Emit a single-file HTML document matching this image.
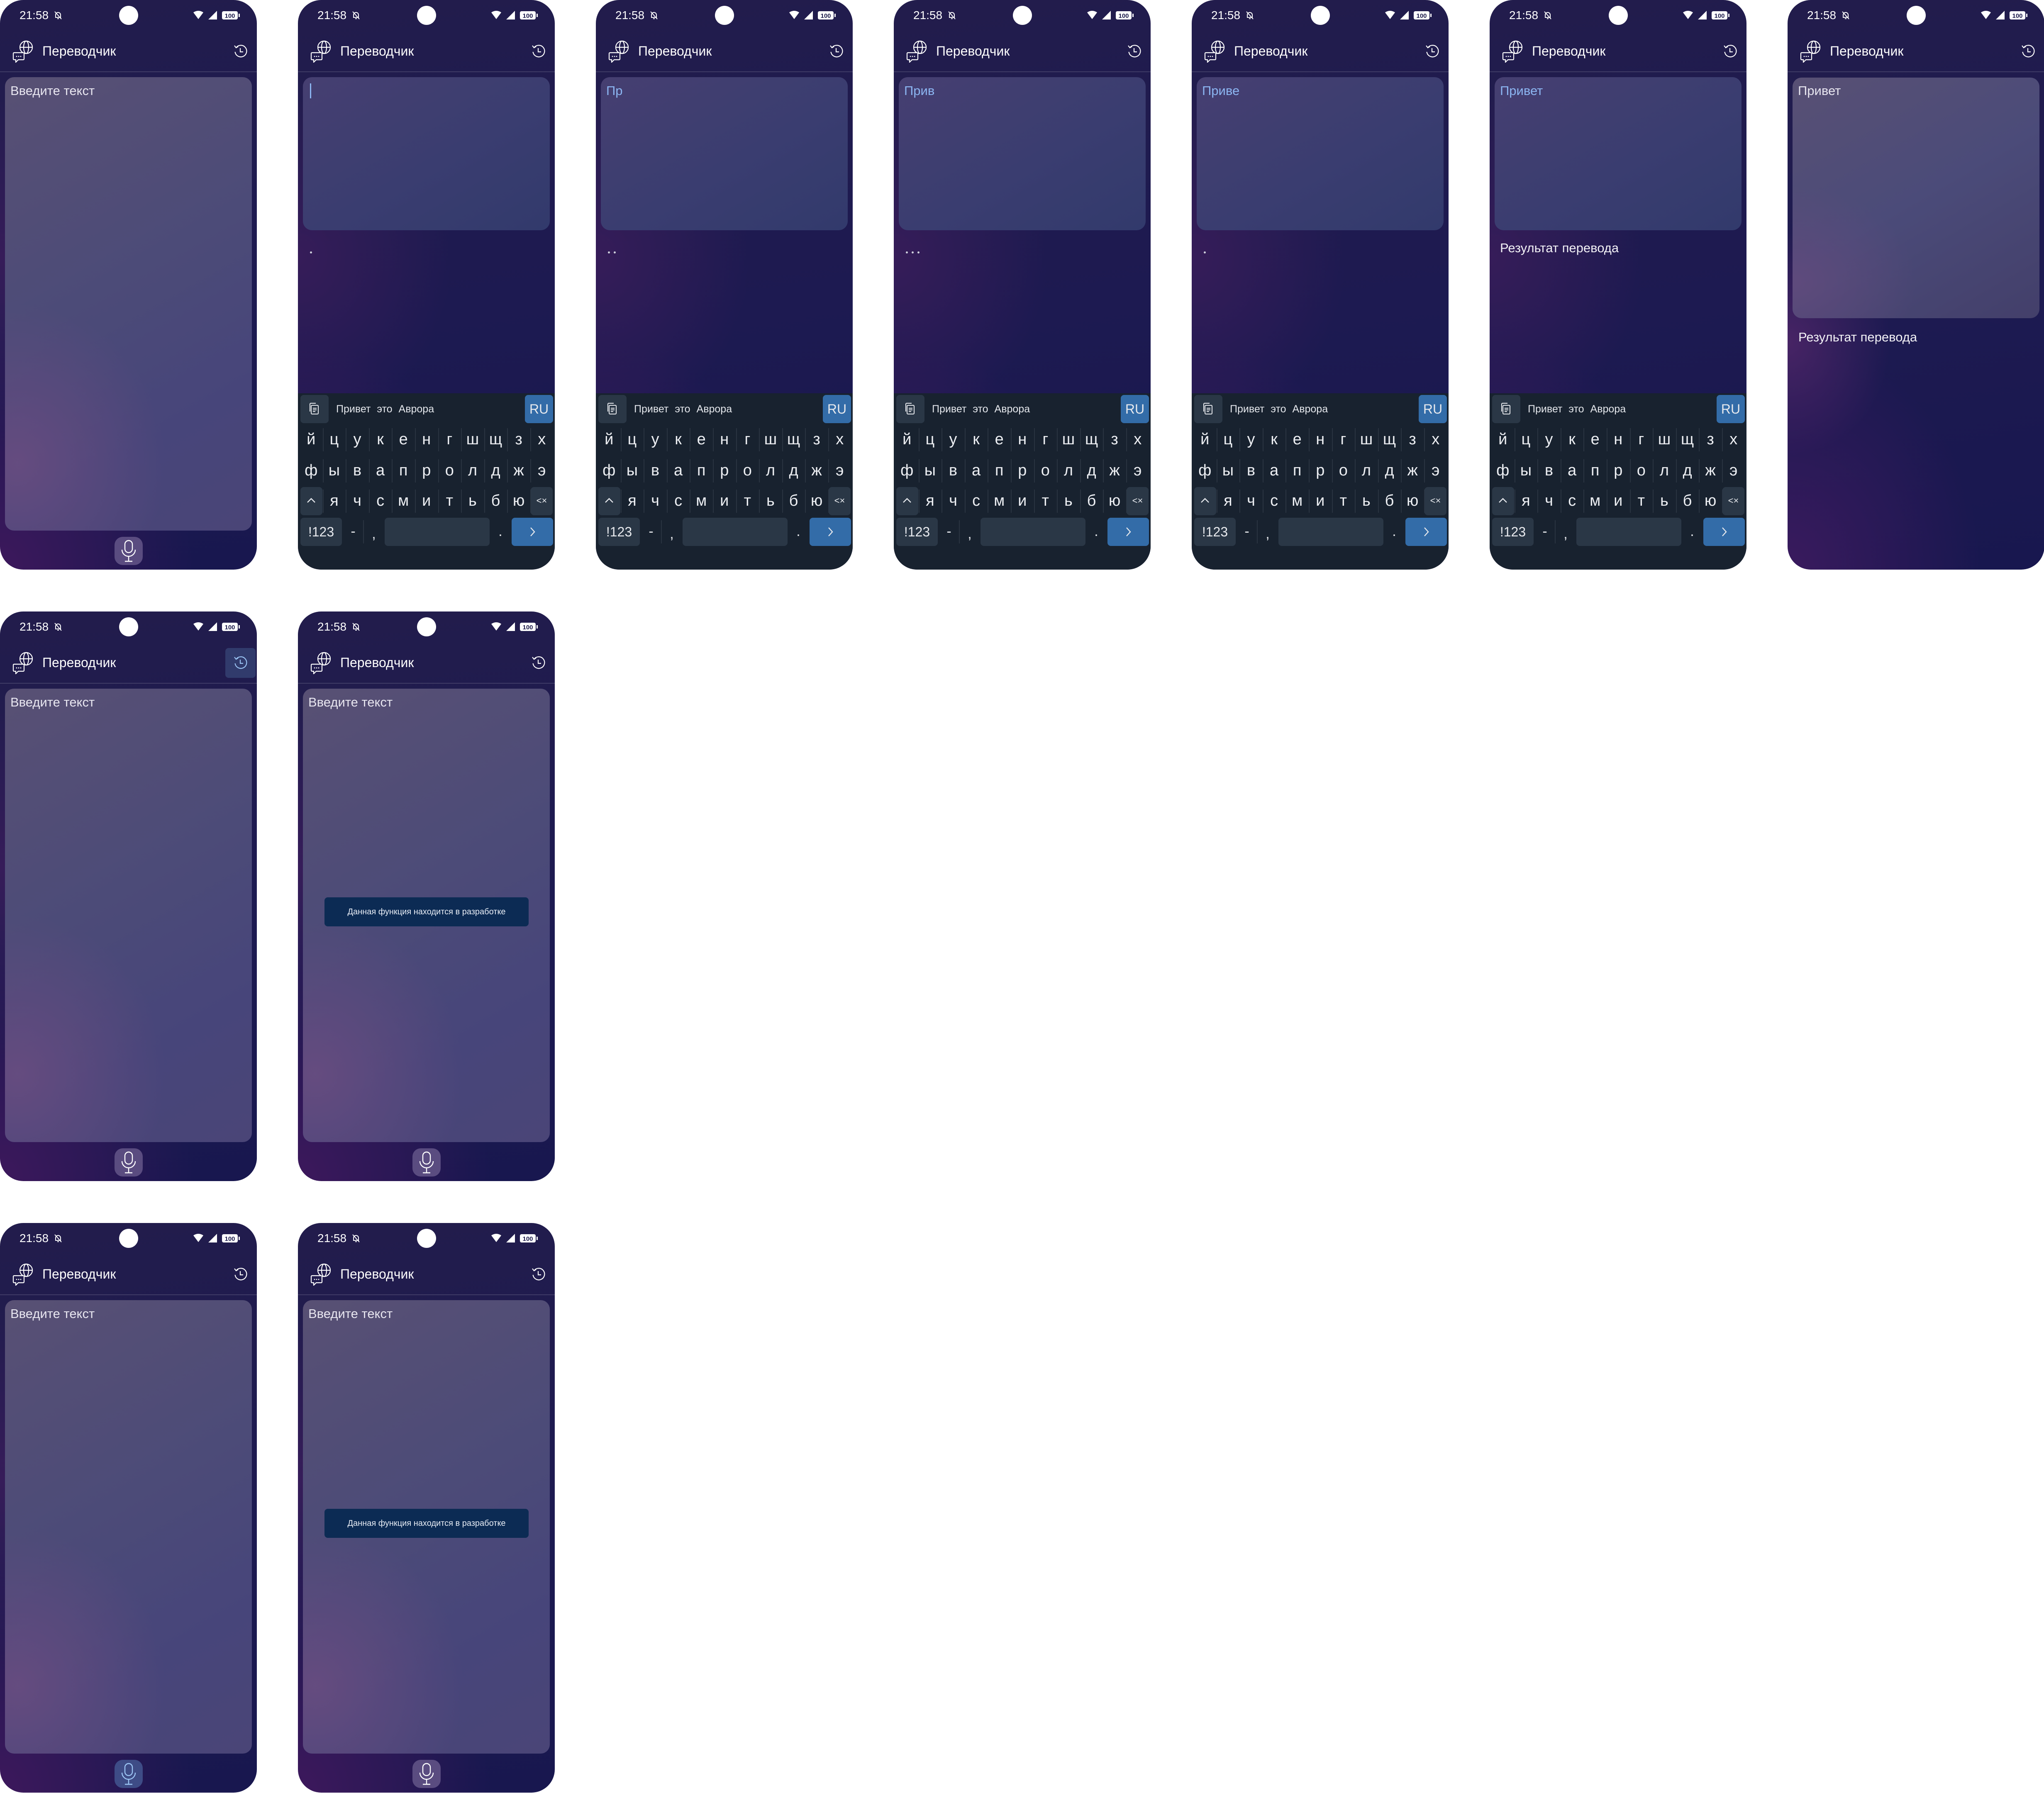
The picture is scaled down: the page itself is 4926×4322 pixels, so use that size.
<!DOCTYPE html>
<html><head><meta charset="utf-8"><style>
*{margin:0;padding:0;box-sizing:border-box}
body{width:4926px;height:4322px;background:#fff;position:relative;overflow:hidden;font-family:"Liberation Sans","Noto Sans CJK SC",sans-serif;color:#ecebf3}
.ph{position:absolute;width:619px;height:1373px;border-radius:56px;overflow:hidden;
background:radial-gradient(ellipse 75% 40% at 0% 100%,#3d185c 0%,rgba(61,24,92,0) 100%),radial-gradient(ellipse 60% 30% at 0% 45%,rgba(70,30,95,.6) 0%,rgba(70,30,95,0) 100%),linear-gradient(170deg,#221c4c 0%,#1d1a51 55%,#18174f 100%)}
.a{position:absolute}
.time{left:47px;top:20px;font-size:28px;line-height:34px;color:#fff}
.cam{left:287px;top:14px;width:46px;height:46px;border-radius:50%;background:#fff}
.title{left:102px;top:104px;font-size:32px;line-height:38px;color:#fff}
.div{left:0;top:172px;width:619px;height:2px;background:rgba(255,255,255,.14)}
.ta{left:12px;top:186px;width:595px;height:1093px;border-radius:22px;
background:radial-gradient(ellipse 60% 35% at 5% 85%,rgba(104,76,128,.9) 0%,rgba(104,76,128,0) 100%),linear-gradient(150deg,#585074 0%,#4c4b78 45%,#47457a 75%,#4a4577 100%)}
.tak{left:12px;top:186px;width:595px;height:369px;border-radius:22px;background:linear-gradient(150deg,#463f71 0%,#3a3d70 55%,#323a6c 100%)}
.ph7ta{left:12px;top:187px;width:595px;height:580px;border-radius:22px;
background:radial-gradient(ellipse 50% 40% at 0% 85%,rgba(100,74,125,.8) 0%,rgba(100,74,125,0) 100%),linear-gradient(150deg,#585074 0%,#4b4b79 50%,#433f6a 100%)}
.ph7{background:radial-gradient(ellipse 40% 20% at 0% 60%,rgba(90,40,110,.7) 0%,rgba(90,40,110,0) 100%),radial-gradient(ellipse 75% 40% at 0% 100%,#3a1a5e 0%,rgba(58,26,94,0) 100%),linear-gradient(170deg,#221c4c 0%,#1d1a51 55%,#18174f 100%)}
.ph_{}
.txt{left:25px;top:200px;font-size:31px;line-height:38px;color:#e8e6f0}
.blue{color:#8cb6f2}
.res{left:25px;font-size:31px;line-height:38px;color:#f2f1f6}
.mic{left:276px;top:1294px;width:68px;height:68px;border-radius:20px;background:#5a4c80}
.dot{width:5px;height:5px;border-radius:50%;background:#cfd0dc;top:606px}
.toast{left:64px;top:689px;width:492px;height:70px;border-radius:8px;background:#0c2b54;color:#e9eef6;font-size:20px;line-height:70px;text-align:center}
.kb{left:0;top:948px;width:619px;height:425px;background:#18222f}
.key{position:absolute;background:#2a3746;border-radius:8px;color:#e8eaee;text-align:center}
.sug{position:absolute;left:92px;top:4px;line-height:68px;font-size:25px;color:#e4e7ec;word-spacing:8px}
.row{position:absolute;left:4px;display:flex;height:56px}
.c{width:55.6px;height:56px;line-height:54px;text-align:center;font-size:38px;color:#eceef2}
.c+.c{box-shadow:inset 2px 0 0 #2a3441}
.hist{left:562px;top:106px}
.hl{left:543px;top:88px;width:73px;height:72px;border-radius:8px;background:#313b6c}
</style></head><body>

<!-- ============ ROW 1 ============ -->
<!-- Phone 1 -->
<div class="ph" style="left:0;top:0">
 <div class="a time">21:58</div>
 <svg class="a" style="left:128px;top:25px" width="24" height="24" viewBox="0 0 24 24" fill="none" stroke="#fff" stroke-width="2"><path d="M6 17 V11 a6 6 0 0 1 12 0 V17 H5 M10 20 h4"/><path d="M4 3 L20 21"/></svg>
 <div class="a cam"></div>
 <svg class="a" style="left:460px;top:22px" width="120" height="30" viewBox="0 0 120 30"><path d="M6 8 Q18 0 30 8 L18 24 Z" fill="#fff"/><path d="M42 25 L63 25 L63 4 Z" fill="#fff"/><rect x="75" y="5" width="38" height="20" rx="4" fill="#fff"/><text x="94" y="21" text-anchor="middle" font-family="Liberation Sans" font-weight="bold" font-size="15" fill="#1d1b4c">100</text><rect x="115" y="11" width="3" height="8" fill="#fff"/></svg>
 <svg class="a" style="left:30px;top:97px" width="50" height="54" viewBox="0 0 50 54" fill="none" stroke="#fff" stroke-width="2.2"><circle cx="33" cy="17" r="15"/><ellipse cx="33" cy="17" rx="6" ry="15"/><line x1="18" y1="17" x2="48" y2="17"/><path d="M4 30 h22 a2 2 0 0 1 2 2 v13 a2 2 0 0 1 -2 2 h-12 l-6 6 v-6 h-4 a2 2 0 0 1 -2 -2 v-13 a2 2 0 0 1 2 -2z" fill="#211c4e"/><g fill="#fff" stroke="none"><circle cx="10" cy="39" r="1.4"/><circle cx="15" cy="39" r="1.4"/><circle cx="20" cy="39" r="1.4"/></g></svg>
 <div class="a title">Переводчик</div>
 <svg class="a hist" width="36" height="36" viewBox="0 0 36 36" fill="none" stroke="#fff" stroke-width="2.2"><path d="M7 9 A14 14 0 1 1 4.5 19"/><path d="M3 4 L7 9 L12 6"/><path d="M17 10 V19 H24"/></svg>
 <div class="a div"></div>
 <div class="a ta"></div>
 <div class="a txt">Введите текст</div>
 <div class="a mic"><svg width="68" height="68" viewBox="0 0 68 68" fill="none" stroke="#fff" stroke-width="2.4"><rect x="25" y="9" width="18" height="29" rx="9"/><path d="M18 31 a16 16 0 0 0 32 0"/><path d="M34 47 V59 M25 59 H43"/></svg></div>
</div>

<!-- Keyboard phones template repeated -->
<!-- Phone 2 -->
<div class="ph" style="left:718px;top:0">
 <div class="a time">21:58</div>
 <svg class="a" style="left:128px;top:25px" width="24" height="24" viewBox="0 0 24 24" fill="none" stroke="#fff" stroke-width="2"><path d="M6 17 V11 a6 6 0 0 1 12 0 V17 H5 M10 20 h4"/><path d="M4 3 L20 21"/></svg>
 <div class="a cam"></div>
 <svg class="a" style="left:460px;top:22px" width="120" height="30" viewBox="0 0 120 30"><path d="M6 8 Q18 0 30 8 L18 24 Z" fill="#fff"/><path d="M42 25 L63 25 L63 4 Z" fill="#fff"/><rect x="75" y="5" width="38" height="20" rx="4" fill="#fff"/><text x="94" y="21" text-anchor="middle" font-family="Liberation Sans" font-weight="bold" font-size="15" fill="#1d1b4c">100</text><rect x="115" y="11" width="3" height="8" fill="#fff"/></svg>
 <svg class="a" style="left:30px;top:97px" width="50" height="54" viewBox="0 0 50 54" fill="none" stroke="#fff" stroke-width="2.2"><circle cx="33" cy="17" r="15"/><ellipse cx="33" cy="17" rx="6" ry="15"/><line x1="18" y1="17" x2="48" y2="17"/><path d="M4 30 h22 a2 2 0 0 1 2 2 v13 a2 2 0 0 1 -2 2 h-12 l-6 6 v-6 h-4 a2 2 0 0 1 -2 -2 v-13 a2 2 0 0 1 2 -2z" fill="#211c4e"/><g fill="#fff" stroke="none"><circle cx="10" cy="39" r="1.4"/><circle cx="15" cy="39" r="1.4"/><circle cx="20" cy="39" r="1.4"/></g></svg>
 <div class="a title">Переводчик</div>
 <svg class="a hist" width="36" height="36" viewBox="0 0 36 36" fill="none" stroke="#fff" stroke-width="2.2"><path d="M7 9 A14 14 0 1 1 4.5 19"/><path d="M3 4 L7 9 L12 6"/><path d="M17 10 V19 H24"/></svg>
 <div class="a div"></div>
 <div class="a tak"></div>
 <div class="a" style="left:29px;top:201px;width:3px;height:36px;background:#8cb6f2"></div>
 <div class="a dot" style="left:29px"></div>
 <div class="a kb">
  <div class="key" style="left:6px;top:4px;width:68px;height:68px"><svg width="68" height="68" viewBox="0 0 68 68" fill="none" stroke="#e8eaee" stroke-width="2"><rect x="26" y="25" width="17" height="21" rx="2"/><path d="M23 40 V22 a2 2 0 0 1 2 -2 H37"/><path d="M30 32 H39 M30 36 H39 M30 40 H36"/></svg></div>
  <div class="sug">Привет это Аврора</div>
  <div class="key" style="left:547px;top:4px;width:68px;height:68px;background:#336ca8;font-size:32px;line-height:68px">RU</div>
  <div class="row" style="top:84px"><div class="c">й</div><div class="c">ц</div><div class="c">у</div><div class="c">к</div><div class="c">е</div><div class="c">н</div><div class="c">г</div><div class="c">ш</div><div class="c">щ</div><div class="c">з</div><div class="c">х</div></div>
  <div class="row" style="top:159px"><div class="c">ф</div><div class="c">ы</div><div class="c">в</div><div class="c">а</div><div class="c">п</div><div class="c">р</div><div class="c">о</div><div class="c">л</div><div class="c">д</div><div class="c">ж</div><div class="c">э</div></div>
  <div class="row" style="top:232px"><div class="c"></div><div class="c">я</div><div class="c">ч</div><div class="c">с</div><div class="c">м</div><div class="c">и</div><div class="c">т</div><div class="c">ь</div><div class="c">б</div><div class="c">ю</div><div class="c"></div></div>
  <div class="key" style="left:6px;top:226px;width:53px;height:68px"><svg width="53" height="68" viewBox="0 0 53 68" fill="none" stroke="#e8eaee" stroke-width="2.4"><path d="M17 37 L26 28 L35 37"/></svg></div>
  <div class="key" style="left:561px;top:226px;width:53px;height:68px;font-size:22px;line-height:66px">&lt;×</div>
  <div class="key" style="left:6px;top:300px;width:100px;height:68px;font-size:32px;line-height:68px">!123</div>
  <div class="a" style="left:123px;top:300px;width:20px;font-size:34px;line-height:66px;color:#e8eaee;text-align:center">-</div>
  <div class="a" style="left:157px;top:306px;width:2px;height:56px;background:#2a3441"></div>
  <div class="a" style="left:173px;top:306px;width:20px;font-size:34px;line-height:66px;color:#e8eaee;text-align:center">,</div>
  <div class="key" style="left:209px;top:300px;width:253px;height:68px"></div>
  <div class="a" style="left:478px;top:300px;width:20px;font-size:34px;line-height:66px;color:#e8eaee;text-align:center">.</div>
  <div class="key" style="left:515px;top:300px;width:100px;height:68px;background:#336ca8"><svg width="100" height="68" viewBox="0 0 100 68" fill="none" stroke="#e8eaee" stroke-width="2.4"><path d="M46 24 L55 34 L46 44"/></svg></div>
 </div>
</div>

<!-- Phone 3 -->
<div class="ph" style="left:1436px;top:0">
 <div class="a time">21:58</div>
 <svg class="a" style="left:128px;top:25px" width="24" height="24" viewBox="0 0 24 24" fill="none" stroke="#fff" stroke-width="2"><path d="M6 17 V11 a6 6 0 0 1 12 0 V17 H5 M10 20 h4"/><path d="M4 3 L20 21"/></svg>
 <div class="a cam"></div>
 <svg class="a" style="left:460px;top:22px" width="120" height="30" viewBox="0 0 120 30"><path d="M6 8 Q18 0 30 8 L18 24 Z" fill="#fff"/><path d="M42 25 L63 25 L63 4 Z" fill="#fff"/><rect x="75" y="5" width="38" height="20" rx="4" fill="#fff"/><text x="94" y="21" text-anchor="middle" font-family="Liberation Sans" font-weight="bold" font-size="15" fill="#1d1b4c">100</text><rect x="115" y="11" width="3" height="8" fill="#fff"/></svg>
 <svg class="a" style="left:30px;top:97px" width="50" height="54" viewBox="0 0 50 54" fill="none" stroke="#fff" stroke-width="2.2"><circle cx="33" cy="17" r="15"/><ellipse cx="33" cy="17" rx="6" ry="15"/><line x1="18" y1="17" x2="48" y2="17"/><path d="M4 30 h22 a2 2 0 0 1 2 2 v13 a2 2 0 0 1 -2 2 h-12 l-6 6 v-6 h-4 a2 2 0 0 1 -2 -2 v-13 a2 2 0 0 1 2 -2z" fill="#211c4e"/><g fill="#fff" stroke="none"><circle cx="10" cy="39" r="1.4"/><circle cx="15" cy="39" r="1.4"/><circle cx="20" cy="39" r="1.4"/></g></svg>
 <div class="a title">Переводчик</div>
 <svg class="a hist" width="36" height="36" viewBox="0 0 36 36" fill="none" stroke="#fff" stroke-width="2.2"><path d="M7 9 A14 14 0 1 1 4.5 19"/><path d="M3 4 L7 9 L12 6"/><path d="M17 10 V19 H24"/></svg>
 <div class="a div"></div>
 <div class="a tak"></div>
 <div class="a txt blue">Пр</div>
 <div class="a dot" style="left:29px"></div><div class="a dot" style="left:43px"></div>
 <div class="a kb">
  <div class="key" style="left:6px;top:4px;width:68px;height:68px"><svg width="68" height="68" viewBox="0 0 68 68" fill="none" stroke="#e8eaee" stroke-width="2"><rect x="26" y="25" width="17" height="21" rx="2"/><path d="M23 40 V22 a2 2 0 0 1 2 -2 H37"/><path d="M30 32 H39 M30 36 H39 M30 40 H36"/></svg></div>
  <div class="sug">Привет это Аврора</div>
  <div class="key" style="left:547px;top:4px;width:68px;height:68px;background:#336ca8;font-size:32px;line-height:68px">RU</div>
  <div class="row" style="top:84px"><div class="c">й</div><div class="c">ц</div><div class="c">у</div><div class="c">к</div><div class="c">е</div><div class="c">н</div><div class="c">г</div><div class="c">ш</div><div class="c">щ</div><div class="c">з</div><div class="c">х</div></div>
  <div class="row" style="top:159px"><div class="c">ф</div><div class="c">ы</div><div class="c">в</div><div class="c">а</div><div class="c">п</div><div class="c">р</div><div class="c">о</div><div class="c">л</div><div class="c">д</div><div class="c">ж</div><div class="c">э</div></div>
  <div class="row" style="top:232px"><div class="c"></div><div class="c">я</div><div class="c">ч</div><div class="c">с</div><div class="c">м</div><div class="c">и</div><div class="c">т</div><div class="c">ь</div><div class="c">б</div><div class="c">ю</div><div class="c"></div></div>
  <div class="key" style="left:6px;top:226px;width:53px;height:68px"><svg width="53" height="68" viewBox="0 0 53 68" fill="none" stroke="#e8eaee" stroke-width="2.4"><path d="M17 37 L26 28 L35 37"/></svg></div>
  <div class="key" style="left:561px;top:226px;width:53px;height:68px;font-size:22px;line-height:66px">&lt;×</div>
  <div class="key" style="left:6px;top:300px;width:100px;height:68px;font-size:32px;line-height:68px">!123</div>
  <div class="a" style="left:123px;top:300px;width:20px;font-size:34px;line-height:66px;color:#e8eaee;text-align:center">-</div>
  <div class="a" style="left:157px;top:306px;width:2px;height:56px;background:#2a3441"></div>
  <div class="a" style="left:173px;top:306px;width:20px;font-size:34px;line-height:66px;color:#e8eaee;text-align:center">,</div>
  <div class="key" style="left:209px;top:300px;width:253px;height:68px"></div>
  <div class="a" style="left:478px;top:300px;width:20px;font-size:34px;line-height:66px;color:#e8eaee;text-align:center">.</div>
  <div class="key" style="left:515px;top:300px;width:100px;height:68px;background:#336ca8"><svg width="100" height="68" viewBox="0 0 100 68" fill="none" stroke="#e8eaee" stroke-width="2.4"><path d="M46 24 L55 34 L46 44"/></svg></div>
 </div>
</div>

<!-- Phone 4 -->
<div class="ph" style="left:2154px;top:0">
 <div class="a time">21:58</div>
 <svg class="a" style="left:128px;top:25px" width="24" height="24" viewBox="0 0 24 24" fill="none" stroke="#fff" stroke-width="2"><path d="M6 17 V11 a6 6 0 0 1 12 0 V17 H5 M10 20 h4"/><path d="M4 3 L20 21"/></svg>
 <div class="a cam"></div>
 <svg class="a" style="left:460px;top:22px" width="120" height="30" viewBox="0 0 120 30"><path d="M6 8 Q18 0 30 8 L18 24 Z" fill="#fff"/><path d="M42 25 L63 25 L63 4 Z" fill="#fff"/><rect x="75" y="5" width="38" height="20" rx="4" fill="#fff"/><text x="94" y="21" text-anchor="middle" font-family="Liberation Sans" font-weight="bold" font-size="15" fill="#1d1b4c">100</text><rect x="115" y="11" width="3" height="8" fill="#fff"/></svg>
 <svg class="a" style="left:30px;top:97px" width="50" height="54" viewBox="0 0 50 54" fill="none" stroke="#fff" stroke-width="2.2"><circle cx="33" cy="17" r="15"/><ellipse cx="33" cy="17" rx="6" ry="15"/><line x1="18" y1="17" x2="48" y2="17"/><path d="M4 30 h22 a2 2 0 0 1 2 2 v13 a2 2 0 0 1 -2 2 h-12 l-6 6 v-6 h-4 a2 2 0 0 1 -2 -2 v-13 a2 2 0 0 1 2 -2z" fill="#211c4e"/><g fill="#fff" stroke="none"><circle cx="10" cy="39" r="1.4"/><circle cx="15" cy="39" r="1.4"/><circle cx="20" cy="39" r="1.4"/></g></svg>
 <div class="a title">Переводчик</div>
 <svg class="a hist" width="36" height="36" viewBox="0 0 36 36" fill="none" stroke="#fff" stroke-width="2.2"><path d="M7 9 A14 14 0 1 1 4.5 19"/><path d="M3 4 L7 9 L12 6"/><path d="M17 10 V19 H24"/></svg>
 <div class="a div"></div>
 <div class="a tak"></div>
 <div class="a txt blue">Прив</div>
 <div class="a dot" style="left:29px"></div><div class="a dot" style="left:43px"></div><div class="a dot" style="left:57px"></div>
 <div class="a kb">
  <div class="key" style="left:6px;top:4px;width:68px;height:68px"><svg width="68" height="68" viewBox="0 0 68 68" fill="none" stroke="#e8eaee" stroke-width="2"><rect x="26" y="25" width="17" height="21" rx="2"/><path d="M23 40 V22 a2 2 0 0 1 2 -2 H37"/><path d="M30 32 H39 M30 36 H39 M30 40 H36"/></svg></div>
  <div class="sug">Привет это Аврора</div>
  <div class="key" style="left:547px;top:4px;width:68px;height:68px;background:#336ca8;font-size:32px;line-height:68px">RU</div>
  <div class="row" style="top:84px"><div class="c">й</div><div class="c">ц</div><div class="c">у</div><div class="c">к</div><div class="c">е</div><div class="c">н</div><div class="c">г</div><div class="c">ш</div><div class="c">щ</div><div class="c">з</div><div class="c">х</div></div>
  <div class="row" style="top:159px"><div class="c">ф</div><div class="c">ы</div><div class="c">в</div><div class="c">а</div><div class="c">п</div><div class="c">р</div><div class="c">о</div><div class="c">л</div><div class="c">д</div><div class="c">ж</div><div class="c">э</div></div>
  <div class="row" style="top:232px"><div class="c"></div><div class="c">я</div><div class="c">ч</div><div class="c">с</div><div class="c">м</div><div class="c">и</div><div class="c">т</div><div class="c">ь</div><div class="c">б</div><div class="c">ю</div><div class="c"></div></div>
  <div class="key" style="left:6px;top:226px;width:53px;height:68px"><svg width="53" height="68" viewBox="0 0 53 68" fill="none" stroke="#e8eaee" stroke-width="2.4"><path d="M17 37 L26 28 L35 37"/></svg></div>
  <div class="key" style="left:561px;top:226px;width:53px;height:68px;font-size:22px;line-height:66px">&lt;×</div>
  <div class="key" style="left:6px;top:300px;width:100px;height:68px;font-size:32px;line-height:68px">!123</div>
  <div class="a" style="left:123px;top:300px;width:20px;font-size:34px;line-height:66px;color:#e8eaee;text-align:center">-</div>
  <div class="a" style="left:157px;top:306px;width:2px;height:56px;background:#2a3441"></div>
  <div class="a" style="left:173px;top:306px;width:20px;font-size:34px;line-height:66px;color:#e8eaee;text-align:center">,</div>
  <div class="key" style="left:209px;top:300px;width:253px;height:68px"></div>
  <div class="a" style="left:478px;top:300px;width:20px;font-size:34px;line-height:66px;color:#e8eaee;text-align:center">.</div>
  <div class="key" style="left:515px;top:300px;width:100px;height:68px;background:#336ca8"><svg width="100" height="68" viewBox="0 0 100 68" fill="none" stroke="#e8eaee" stroke-width="2.4"><path d="M46 24 L55 34 L46 44"/></svg></div>
 </div>
</div>

<!-- Phone 5 -->
<div class="ph" style="left:2872px;top:0">
 <div class="a time">21:58</div>
 <svg class="a" style="left:128px;top:25px" width="24" height="24" viewBox="0 0 24 24" fill="none" stroke="#fff" stroke-width="2"><path d="M6 17 V11 a6 6 0 0 1 12 0 V17 H5 M10 20 h4"/><path d="M4 3 L20 21"/></svg>
 <div class="a cam"></div>
 <svg class="a" style="left:460px;top:22px" width="120" height="30" viewBox="0 0 120 30"><path d="M6 8 Q18 0 30 8 L18 24 Z" fill="#fff"/><path d="M42 25 L63 25 L63 4 Z" fill="#fff"/><rect x="75" y="5" width="38" height="20" rx="4" fill="#fff"/><text x="94" y="21" text-anchor="middle" font-family="Liberation Sans" font-weight="bold" font-size="15" fill="#1d1b4c">100</text><rect x="115" y="11" width="3" height="8" fill="#fff"/></svg>
 <svg class="a" style="left:30px;top:97px" width="50" height="54" viewBox="0 0 50 54" fill="none" stroke="#fff" stroke-width="2.2"><circle cx="33" cy="17" r="15"/><ellipse cx="33" cy="17" rx="6" ry="15"/><line x1="18" y1="17" x2="48" y2="17"/><path d="M4 30 h22 a2 2 0 0 1 2 2 v13 a2 2 0 0 1 -2 2 h-12 l-6 6 v-6 h-4 a2 2 0 0 1 -2 -2 v-13 a2 2 0 0 1 2 -2z" fill="#211c4e"/><g fill="#fff" stroke="none"><circle cx="10" cy="39" r="1.4"/><circle cx="15" cy="39" r="1.4"/><circle cx="20" cy="39" r="1.4"/></g></svg>
 <div class="a title">Переводчик</div>
 <svg class="a hist" width="36" height="36" viewBox="0 0 36 36" fill="none" stroke="#fff" stroke-width="2.2"><path d="M7 9 A14 14 0 1 1 4.5 19"/><path d="M3 4 L7 9 L12 6"/><path d="M17 10 V19 H24"/></svg>
 <div class="a div"></div>
 <div class="a tak"></div>
 <div class="a txt blue">Приве</div>
 <div class="a dot" style="left:29px"></div>
 <div class="a kb">
  <div class="key" style="left:6px;top:4px;width:68px;height:68px"><svg width="68" height="68" viewBox="0 0 68 68" fill="none" stroke="#e8eaee" stroke-width="2"><rect x="26" y="25" width="17" height="21" rx="2"/><path d="M23 40 V22 a2 2 0 0 1 2 -2 H37"/><path d="M30 32 H39 M30 36 H39 M30 40 H36"/></svg></div>
  <div class="sug">Привет это Аврора</div>
  <div class="key" style="left:547px;top:4px;width:68px;height:68px;background:#336ca8;font-size:32px;line-height:68px">RU</div>
  <div class="row" style="top:84px"><div class="c">й</div><div class="c">ц</div><div class="c">у</div><div class="c">к</div><div class="c">е</div><div class="c">н</div><div class="c">г</div><div class="c">ш</div><div class="c">щ</div><div class="c">з</div><div class="c">х</div></div>
  <div class="row" style="top:159px"><div class="c">ф</div><div class="c">ы</div><div class="c">в</div><div class="c">а</div><div class="c">п</div><div class="c">р</div><div class="c">о</div><div class="c">л</div><div class="c">д</div><div class="c">ж</div><div class="c">э</div></div>
  <div class="row" style="top:232px"><div class="c"></div><div class="c">я</div><div class="c">ч</div><div class="c">с</div><div class="c">м</div><div class="c">и</div><div class="c">т</div><div class="c">ь</div><div class="c">б</div><div class="c">ю</div><div class="c"></div></div>
  <div class="key" style="left:6px;top:226px;width:53px;height:68px"><svg width="53" height="68" viewBox="0 0 53 68" fill="none" stroke="#e8eaee" stroke-width="2.4"><path d="M17 37 L26 28 L35 37"/></svg></div>
  <div class="key" style="left:561px;top:226px;width:53px;height:68px;font-size:22px;line-height:66px">&lt;×</div>
  <div class="key" style="left:6px;top:300px;width:100px;height:68px;font-size:32px;line-height:68px">!123</div>
  <div class="a" style="left:123px;top:300px;width:20px;font-size:34px;line-height:66px;color:#e8eaee;text-align:center">-</div>
  <div class="a" style="left:157px;top:306px;width:2px;height:56px;background:#2a3441"></div>
  <div class="a" style="left:173px;top:306px;width:20px;font-size:34px;line-height:66px;color:#e8eaee;text-align:center">,</div>
  <div class="key" style="left:209px;top:300px;width:253px;height:68px"></div>
  <div class="a" style="left:478px;top:300px;width:20px;font-size:34px;line-height:66px;color:#e8eaee;text-align:center">.</div>
  <div class="key" style="left:515px;top:300px;width:100px;height:68px;background:#336ca8"><svg width="100" height="68" viewBox="0 0 100 68" fill="none" stroke="#e8eaee" stroke-width="2.4"><path d="M46 24 L55 34 L46 44"/></svg></div>
 </div>
</div>

<!-- Phone 6 -->
<div class="ph" style="left:3590px;top:0">
 <div class="a time">21:58</div>
 <svg class="a" style="left:128px;top:25px" width="24" height="24" viewBox="0 0 24 24" fill="none" stroke="#fff" stroke-width="2"><path d="M6 17 V11 a6 6 0 0 1 12 0 V17 H5 M10 20 h4"/><path d="M4 3 L20 21"/></svg>
 <div class="a cam"></div>
 <svg class="a" style="left:460px;top:22px" width="120" height="30" viewBox="0 0 120 30"><path d="M6 8 Q18 0 30 8 L18 24 Z" fill="#fff"/><path d="M42 25 L63 25 L63 4 Z" fill="#fff"/><rect x="75" y="5" width="38" height="20" rx="4" fill="#fff"/><text x="94" y="21" text-anchor="middle" font-family="Liberation Sans" font-weight="bold" font-size="15" fill="#1d1b4c">100</text><rect x="115" y="11" width="3" height="8" fill="#fff"/></svg>
 <svg class="a" style="left:30px;top:97px" width="50" height="54" viewBox="0 0 50 54" fill="none" stroke="#fff" stroke-width="2.2"><circle cx="33" cy="17" r="15"/><ellipse cx="33" cy="17" rx="6" ry="15"/><line x1="18" y1="17" x2="48" y2="17"/><path d="M4 30 h22 a2 2 0 0 1 2 2 v13 a2 2 0 0 1 -2 2 h-12 l-6 6 v-6 h-4 a2 2 0 0 1 -2 -2 v-13 a2 2 0 0 1 2 -2z" fill="#211c4e"/><g fill="#fff" stroke="none"><circle cx="10" cy="39" r="1.4"/><circle cx="15" cy="39" r="1.4"/><circle cx="20" cy="39" r="1.4"/></g></svg>
 <div class="a title">Переводчик</div>
 <svg class="a hist" width="36" height="36" viewBox="0 0 36 36" fill="none" stroke="#fff" stroke-width="2.2"><path d="M7 9 A14 14 0 1 1 4.5 19"/><path d="M3 4 L7 9 L12 6"/><path d="M17 10 V19 H24"/></svg>
 <div class="a div"></div>
 <div class="a tak"></div>
 <div class="a txt blue">Привет</div>
 <div class="a res" style="top:579px">Результат перевода</div>
 <div class="a kb">
  <div class="key" style="left:6px;top:4px;width:68px;height:68px"><svg width="68" height="68" viewBox="0 0 68 68" fill="none" stroke="#e8eaee" stroke-width="2"><rect x="26" y="25" width="17" height="21" rx="2"/><path d="M23 40 V22 a2 2 0 0 1 2 -2 H37"/><path d="M30 32 H39 M30 36 H39 M30 40 H36"/></svg></div>
  <div class="sug">Привет это Аврора</div>
  <div class="key" style="left:547px;top:4px;width:68px;height:68px;background:#336ca8;font-size:32px;line-height:68px">RU</div>
  <div class="row" style="top:84px"><div class="c">й</div><div class="c">ц</div><div class="c">у</div><div class="c">к</div><div class="c">е</div><div class="c">н</div><div class="c">г</div><div class="c">ш</div><div class="c">щ</div><div class="c">з</div><div class="c">х</div></div>
  <div class="row" style="top:159px"><div class="c">ф</div><div class="c">ы</div><div class="c">в</div><div class="c">а</div><div class="c">п</div><div class="c">р</div><div class="c">о</div><div class="c">л</div><div class="c">д</div><div class="c">ж</div><div class="c">э</div></div>
  <div class="row" style="top:232px"><div class="c"></div><div class="c">я</div><div class="c">ч</div><div class="c">с</div><div class="c">м</div><div class="c">и</div><div class="c">т</div><div class="c">ь</div><div class="c">б</div><div class="c">ю</div><div class="c"></div></div>
  <div class="key" style="left:6px;top:226px;width:53px;height:68px"><svg width="53" height="68" viewBox="0 0 53 68" fill="none" stroke="#e8eaee" stroke-width="2.4"><path d="M17 37 L26 28 L35 37"/></svg></div>
  <div class="key" style="left:561px;top:226px;width:53px;height:68px;font-size:22px;line-height:66px">&lt;×</div>
  <div class="key" style="left:6px;top:300px;width:100px;height:68px;font-size:32px;line-height:68px">!123</div>
  <div class="a" style="left:123px;top:300px;width:20px;font-size:34px;line-height:66px;color:#e8eaee;text-align:center">-</div>
  <div class="a" style="left:157px;top:306px;width:2px;height:56px;background:#2a3441"></div>
  <div class="a" style="left:173px;top:306px;width:20px;font-size:34px;line-height:66px;color:#e8eaee;text-align:center">,</div>
  <div class="key" style="left:209px;top:300px;width:253px;height:68px"></div>
  <div class="a" style="left:478px;top:300px;width:20px;font-size:34px;line-height:66px;color:#e8eaee;text-align:center">.</div>
  <div class="key" style="left:515px;top:300px;width:100px;height:68px;background:#336ca8"><svg width="100" height="68" viewBox="0 0 100 68" fill="none" stroke="#e8eaee" stroke-width="2.4"><path d="M46 24 L55 34 L46 44"/></svg></div>
 </div>
</div>

<!-- Phone 7 -->
<div class="ph ph7" style="left:4308px;top:0">
 <div class="a time">21:58</div>
 <svg class="a" style="left:128px;top:25px" width="24" height="24" viewBox="0 0 24 24" fill="none" stroke="#fff" stroke-width="2"><path d="M6 17 V11 a6 6 0 0 1 12 0 V17 H5 M10 20 h4"/><path d="M4 3 L20 21"/></svg>
 <div class="a cam"></div>
 <svg class="a" style="left:460px;top:22px" width="120" height="30" viewBox="0 0 120 30"><path d="M6 8 Q18 0 30 8 L18 24 Z" fill="#fff"/><path d="M42 25 L63 25 L63 4 Z" fill="#fff"/><rect x="75" y="5" width="38" height="20" rx="4" fill="#fff"/><text x="94" y="21" text-anchor="middle" font-family="Liberation Sans" font-weight="bold" font-size="15" fill="#1d1b4c">100</text><rect x="115" y="11" width="3" height="8" fill="#fff"/></svg>
 <svg class="a" style="left:30px;top:97px" width="50" height="54" viewBox="0 0 50 54" fill="none" stroke="#fff" stroke-width="2.2"><circle cx="33" cy="17" r="15"/><ellipse cx="33" cy="17" rx="6" ry="15"/><line x1="18" y1="17" x2="48" y2="17"/><path d="M4 30 h22 a2 2 0 0 1 2 2 v13 a2 2 0 0 1 -2 2 h-12 l-6 6 v-6 h-4 a2 2 0 0 1 -2 -2 v-13 a2 2 0 0 1 2 -2z" fill="#211c4e"/><g fill="#fff" stroke="none"><circle cx="10" cy="39" r="1.4"/><circle cx="15" cy="39" r="1.4"/><circle cx="20" cy="39" r="1.4"/></g></svg>
 <div class="a title">Переводчик</div>
 <svg class="a hist" width="36" height="36" viewBox="0 0 36 36" fill="none" stroke="#fff" stroke-width="2.2"><path d="M7 9 A14 14 0 1 1 4.5 19"/><path d="M3 4 L7 9 L12 6"/><path d="M17 10 V19 H24"/></svg>
 <div class="a div"></div>
 <div class="a ph7ta"></div>
 <div class="a txt">Привет</div>
 <div class="a res" style="top:794px;left:26px">Результат перевода</div>
</div>

<!-- ============ ROW 2 ============ -->
<div class="ph" style="left:0;top:1474px">
 <div class="a time">21:58</div>
 <svg class="a" style="left:128px;top:25px" width="24" height="24" viewBox="0 0 24 24" fill="none" stroke="#fff" stroke-width="2"><path d="M6 17 V11 a6 6 0 0 1 12 0 V17 H5 M10 20 h4"/><path d="M4 3 L20 21"/></svg>
 <div class="a cam"></div>
 <svg class="a" style="left:460px;top:22px" width="120" height="30" viewBox="0 0 120 30"><path d="M6 8 Q18 0 30 8 L18 24 Z" fill="#fff"/><path d="M42 25 L63 25 L63 4 Z" fill="#fff"/><rect x="75" y="5" width="38" height="20" rx="4" fill="#fff"/><text x="94" y="21" text-anchor="middle" font-family="Liberation Sans" font-weight="bold" font-size="15" fill="#1d1b4c">100</text><rect x="115" y="11" width="3" height="8" fill="#fff"/></svg>
 <svg class="a" style="left:30px;top:97px" width="50" height="54" viewBox="0 0 50 54" fill="none" stroke="#fff" stroke-width="2.2"><circle cx="33" cy="17" r="15"/><ellipse cx="33" cy="17" rx="6" ry="15"/><line x1="18" y1="17" x2="48" y2="17"/><path d="M4 30 h22 a2 2 0 0 1 2 2 v13 a2 2 0 0 1 -2 2 h-12 l-6 6 v-6 h-4 a2 2 0 0 1 -2 -2 v-13 a2 2 0 0 1 2 -2z" fill="#211c4e"/><g fill="#fff" stroke="none"><circle cx="10" cy="39" r="1.4"/><circle cx="15" cy="39" r="1.4"/><circle cx="20" cy="39" r="1.4"/></g></svg>
 <div class="a title">Переводчик</div>
 <div class="a hl"></div>
 <svg class="a hist" width="36" height="36" viewBox="0 0 36 36" fill="none" stroke="#9cc6f5" stroke-width="2.2"><path d="M7 9 A14 14 0 1 1 4.5 19"/><path d="M3 4 L7 9 L12 6"/><path d="M17 10 V19 H24"/></svg>
 <div class="a div"></div>
 <div class="a ta"></div>
 <div class="a txt">Введите текст</div>
 <div class="a mic"><svg width="68" height="68" viewBox="0 0 68 68" fill="none" stroke="#fff" stroke-width="2.4"><rect x="25" y="9" width="18" height="29" rx="9"/><path d="M18 31 a16 16 0 0 0 32 0"/><path d="M34 47 V59 M25 59 H43"/></svg></div>
</div>

<div class="ph" style="left:718px;top:1474px">
 <div class="a time">21:58</div>
 <svg class="a" style="left:128px;top:25px" width="24" height="24" viewBox="0 0 24 24" fill="none" stroke="#fff" stroke-width="2"><path d="M6 17 V11 a6 6 0 0 1 12 0 V17 H5 M10 20 h4"/><path d="M4 3 L20 21"/></svg>
 <div class="a cam"></div>
 <svg class="a" style="left:460px;top:22px" width="120" height="30" viewBox="0 0 120 30"><path d="M6 8 Q18 0 30 8 L18 24 Z" fill="#fff"/><path d="M42 25 L63 25 L63 4 Z" fill="#fff"/><rect x="75" y="5" width="38" height="20" rx="4" fill="#fff"/><text x="94" y="21" text-anchor="middle" font-family="Liberation Sans" font-weight="bold" font-size="15" fill="#1d1b4c">100</text><rect x="115" y="11" width="3" height="8" fill="#fff"/></svg>
 <svg class="a" style="left:30px;top:97px" width="50" height="54" viewBox="0 0 50 54" fill="none" stroke="#fff" stroke-width="2.2"><circle cx="33" cy="17" r="15"/><ellipse cx="33" cy="17" rx="6" ry="15"/><line x1="18" y1="17" x2="48" y2="17"/><path d="M4 30 h22 a2 2 0 0 1 2 2 v13 a2 2 0 0 1 -2 2 h-12 l-6 6 v-6 h-4 a2 2 0 0 1 -2 -2 v-13 a2 2 0 0 1 2 -2z" fill="#211c4e"/><g fill="#fff" stroke="none"><circle cx="10" cy="39" r="1.4"/><circle cx="15" cy="39" r="1.4"/><circle cx="20" cy="39" r="1.4"/></g></svg>
 <div class="a title">Переводчик</div>
 <svg class="a hist" width="36" height="36" viewBox="0 0 36 36" fill="none" stroke="#fff" stroke-width="2.2"><path d="M7 9 A14 14 0 1 1 4.5 19"/><path d="M3 4 L7 9 L12 6"/><path d="M17 10 V19 H24"/></svg>
 <div class="a div"></div>
 <div class="a ta"></div>
 <div class="a txt">Введите текст</div>
 <div class="a toast">Данная функция находится в разработке</div>
 <div class="a mic"><svg width="68" height="68" viewBox="0 0 68 68" fill="none" stroke="#fff" stroke-width="2.4"><rect x="25" y="9" width="18" height="29" rx="9"/><path d="M18 31 a16 16 0 0 0 32 0"/><path d="M34 47 V59 M25 59 H43"/></svg></div>
</div>

<!-- ============ ROW 3 ============ -->
<div class="ph" style="left:0;top:2948px">
 <div class="a time">21:58</div>
 <svg class="a" style="left:128px;top:25px" width="24" height="24" viewBox="0 0 24 24" fill="none" stroke="#fff" stroke-width="2"><path d="M6 17 V11 a6 6 0 0 1 12 0 V17 H5 M10 20 h4"/><path d="M4 3 L20 21"/></svg>
 <div class="a cam"></div>
 <svg class="a" style="left:460px;top:22px" width="120" height="30" viewBox="0 0 120 30"><path d="M6 8 Q18 0 30 8 L18 24 Z" fill="#fff"/><path d="M42 25 L63 25 L63 4 Z" fill="#fff"/><rect x="75" y="5" width="38" height="20" rx="4" fill="#fff"/><text x="94" y="21" text-anchor="middle" font-family="Liberation Sans" font-weight="bold" font-size="15" fill="#1d1b4c">100</text><rect x="115" y="11" width="3" height="8" fill="#fff"/></svg>
 <svg class="a" style="left:30px;top:97px" width="50" height="54" viewBox="0 0 50 54" fill="none" stroke="#fff" stroke-width="2.2"><circle cx="33" cy="17" r="15"/><ellipse cx="33" cy="17" rx="6" ry="15"/><line x1="18" y1="17" x2="48" y2="17"/><path d="M4 30 h22 a2 2 0 0 1 2 2 v13 a2 2 0 0 1 -2 2 h-12 l-6 6 v-6 h-4 a2 2 0 0 1 -2 -2 v-13 a2 2 0 0 1 2 -2z" fill="#211c4e"/><g fill="#fff" stroke="none"><circle cx="10" cy="39" r="1.4"/><circle cx="15" cy="39" r="1.4"/><circle cx="20" cy="39" r="1.4"/></g></svg>
 <div class="a title">Переводчик</div>
 <svg class="a hist" width="36" height="36" viewBox="0 0 36 36" fill="none" stroke="#fff" stroke-width="2.2"><path d="M7 9 A14 14 0 1 1 4.5 19"/><path d="M3 4 L7 9 L12 6"/><path d="M17 10 V19 H24"/></svg>
 <div class="a div"></div>
 <div class="a ta"></div>
 <div class="a txt">Введите текст</div>
 <div class="a mic" style="background:#3e4c86"><svg width="68" height="68" viewBox="0 0 68 68" fill="none" stroke="#9cc6f5" stroke-width="2.4"><rect x="25" y="9" width="18" height="29" rx="9"/><path d="M18 31 a16 16 0 0 0 32 0"/><path d="M34 47 V59 M25 59 H43"/></svg></div>
</div>

<div class="ph" style="left:718px;top:2948px">
 <div class="a time">21:58</div>
 <svg class="a" style="left:128px;top:25px" width="24" height="24" viewBox="0 0 24 24" fill="none" stroke="#fff" stroke-width="2"><path d="M6 17 V11 a6 6 0 0 1 12 0 V17 H5 M10 20 h4"/><path d="M4 3 L20 21"/></svg>
 <div class="a cam"></div>
 <svg class="a" style="left:460px;top:22px" width="120" height="30" viewBox="0 0 120 30"><path d="M6 8 Q18 0 30 8 L18 24 Z" fill="#fff"/><path d="M42 25 L63 25 L63 4 Z" fill="#fff"/><rect x="75" y="5" width="38" height="20" rx="4" fill="#fff"/><text x="94" y="21" text-anchor="middle" font-family="Liberation Sans" font-weight="bold" font-size="15" fill="#1d1b4c">100</text><rect x="115" y="11" width="3" height="8" fill="#fff"/></svg>
 <svg class="a" style="left:30px;top:97px" width="50" height="54" viewBox="0 0 50 54" fill="none" stroke="#fff" stroke-width="2.2"><circle cx="33" cy="17" r="15"/><ellipse cx="33" cy="17" rx="6" ry="15"/><line x1="18" y1="17" x2="48" y2="17"/><path d="M4 30 h22 a2 2 0 0 1 2 2 v13 a2 2 0 0 1 -2 2 h-12 l-6 6 v-6 h-4 a2 2 0 0 1 -2 -2 v-13 a2 2 0 0 1 2 -2z" fill="#211c4e"/><g fill="#fff" stroke="none"><circle cx="10" cy="39" r="1.4"/><circle cx="15" cy="39" r="1.4"/><circle cx="20" cy="39" r="1.4"/></g></svg>
 <div class="a title">Переводчик</div>
 <svg class="a hist" width="36" height="36" viewBox="0 0 36 36" fill="none" stroke="#fff" stroke-width="2.2"><path d="M7 9 A14 14 0 1 1 4.5 19"/><path d="M3 4 L7 9 L12 6"/><path d="M17 10 V19 H24"/></svg>
 <div class="a div"></div>
 <div class="a ta"></div>
 <div class="a txt">Введите текст</div>
 <div class="a toast">Данная функция находится в разработке</div>
 <div class="a mic"><svg width="68" height="68" viewBox="0 0 68 68" fill="none" stroke="#fff" stroke-width="2.4"><rect x="25" y="9" width="18" height="29" rx="9"/><path d="M18 31 a16 16 0 0 0 32 0"/><path d="M34 47 V59 M25 59 H43"/></svg></div>
</div>

</body></html>
